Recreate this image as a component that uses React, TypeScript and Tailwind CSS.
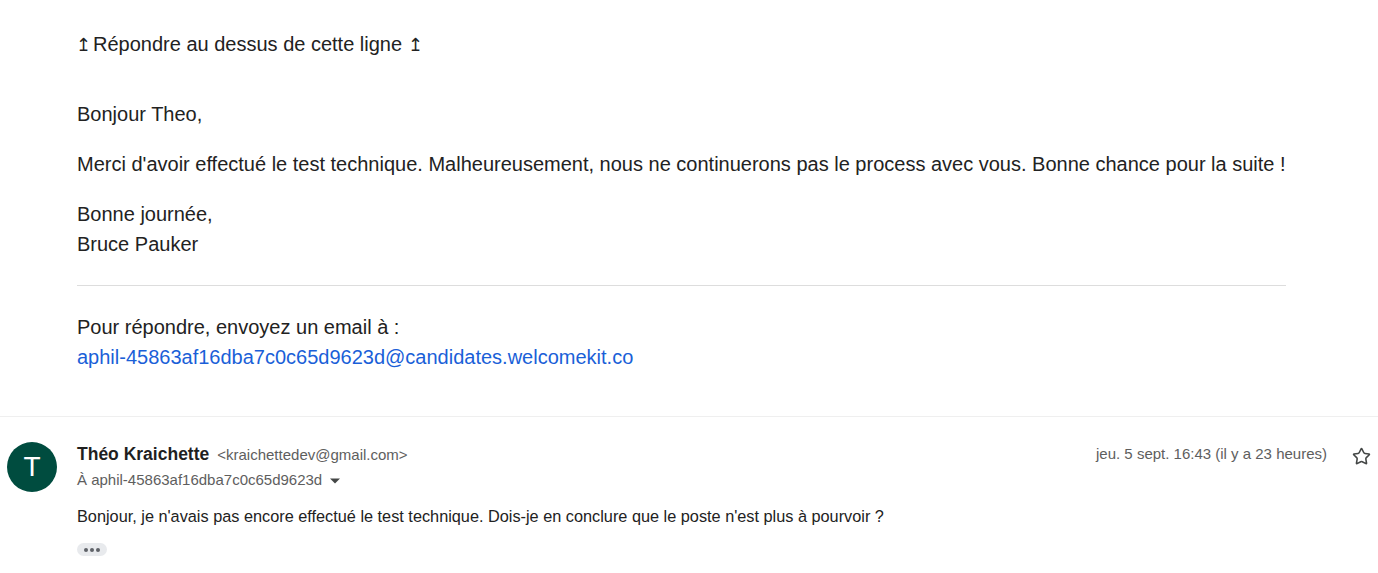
import { Star } from 'lucide-react';

export default function App() {
  return (
    <div className="w-[1378px] h-[573px] bg-white overflow-hidden">
      {/* Message body */}
      <div className="pl-[77px] pr-[92px] pt-[29px] pb-[44px] text-[20px] leading-[30px] text-[#222222] font-['Liberation_Sans',Arial,sans-serif]">
        <p className="h-[30px]">
          <span className="inline-block w-[16px] -ml-[1px] mr-[1px] text-[18px] leading-none font-['DejaVu_Sans',sans-serif] font-light">↥</span>
          Répondre au dessus de cette ligne{' '}
          <span className="inline-block text-[18px] leading-none font-['DejaVu_Sans',sans-serif] font-light">↥</span>
        </p>
        <p className="mt-[40px]">Bonjour Theo,</p>
        <p className="mt-[20px]">
          Merci d'avoir effectué le test technique. Malheureusement, nous ne continuerons pas le process avec vous. Bonne chance pour la suite !
        </p>
        <p className="mt-[20px]">
          Bonne journée,
          <br />
          Bruce Pauker
        </p>
        <div className="mt-[26px] border-t border-[#dddddd]" />
        <p className="mt-[26px]">
          Pour répondre, envoyez un email à :
          <br />
          <a className="text-[#1a5fd8]" href="#">
            aphil-45863af16dba7c0c65d9623d@candidates.welcomekit.co
          </a>
        </p>
      </div>

      {/* Reply message */}
      <div className="border-t border-[#efefef] flex pt-[25px]">
        <div className="w-[77px] shrink-0 pl-[7px]">
          <div className="w-[50px] h-[50px] rounded-full bg-[#004c3f] text-white flex items-center justify-center text-[28px] font-['Liberation_Sans',Arial,sans-serif]">
            T
          </div>
        </div>
        <div className="flex-1 font-['Liberation_Sans',Arial,sans-serif]">
          <div className="flex items-start">
            <div className="flex-1 pt-[2px]">
              <div className="flex items-baseline gap-[8px] leading-[20px]">
                <span className="text-[17.5px] font-bold text-[#1f1f1f]">Théo Kraichette</span>
                <span className="text-[15px] text-[#5e5e5e]">&lt;kraichettedev@gmail.com&gt;</span>
              </div>
              <div className="flex items-center gap-[8px] mt-[5px] text-[15px] leading-[20px] text-[#5e5e5e]">
                <span>À aphil-45863af16dba7c0c65d9623d</span>
                <svg width="10" height="6" viewBox="0 0 10 5" className="mt-[2px]">
                  <path d="M0 0 L10 0 L5 5 Z" fill="#444746" />
                </svg>
              </div>
            </div>
            <div className="pt-[2px] text-[15px] leading-[20px] text-[#5e5e5e] pr-[21px]">jeu. 5 sept. 16:43 (il y a 23 heures)</div>
            <div className="pt-[5px] pr-[4px] w-[30px] flex justify-center">
              <Star className="w-[19px] h-[19px] text-[#444746]" strokeWidth={2} />
            </div>
          </div>
          <p className="mt-[16px] text-[16.3px] leading-[20px] text-[#222222]">
            Bonjour, je n'avais pas encore effectué le test technique. Dois-je en conclure que le poste n'est plus à pourvoir ?
          </p>
          <div className="mt-[17px] w-[30px] h-[13px] rounded-full bg-[#e8eaed] flex items-center justify-center gap-[2px]">
            <span className="w-[4px] h-[4px] rounded-full bg-[#5f6368]" />
            <span className="w-[4px] h-[4px] rounded-full bg-[#5f6368]" />
            <span className="w-[4px] h-[4px] rounded-full bg-[#5f6368]" />
          </div>
        </div>
      </div>
    </div>
  );
}
